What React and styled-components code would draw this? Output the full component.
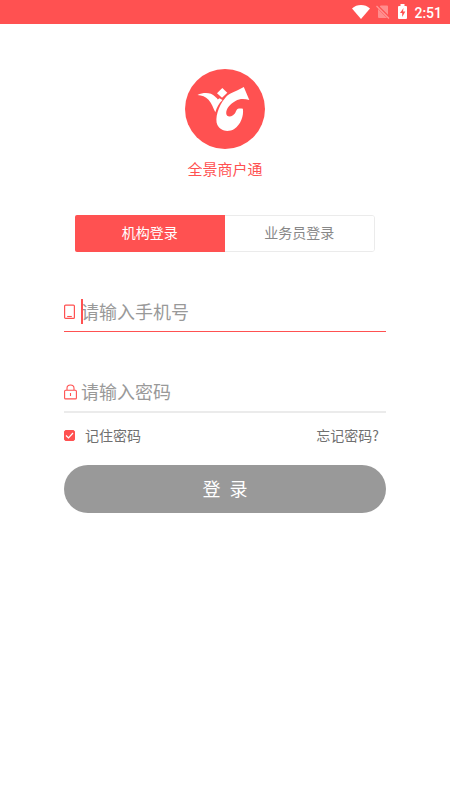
import React, { useState } from "react";
import styled, { createGlobalStyle } from "styled-components";

const RED = "#ff5151";

const GlobalStyle = createGlobalStyle`
  *, *::before, *::after { box-sizing: border-box; }
  body {
    margin: 0;
    background: #fff;
    font-family: "Noto Sans CJK SC", sans-serif;
  }
  button, input { font-family: inherit; }
`;

const StatusBar = styled.header`
  display: flex;
  align-items: center;
  justify-content: flex-end;
  height: 24px;
  padding-right: 8px;
  background: ${RED};
  color: #fff;
`;

const StatusIcon = styled.svg`
  display: block;
  flex: none;
  margin-right: ${(p) => p.$gap}px;
`;

const Clock = styled.time`
  font: 500 14px/24px Roboto, sans-serif;
  padding-top: 1px;
`;

const Page = styled.main`
  display: flex;
  flex-direction: column;
  align-items: center;
  padding: 45px 64px 0;
`;

const Logo = styled.svg`
  display: block;
  width: 80px;
  height: 80px;
`;

const AppName = styled.h1`
  margin: 10px 0 0;
  color: ${RED};
  font-size: 15px;
  font-weight: 400;
  line-height: 20px;
`;

const Tabs = styled.div`
  display: flex;
  align-self: stretch;
  height: 37px;
  margin: 36px 11px 0;
  border: 1px solid #ebebeb;
  border-radius: 3px;
`;

const Tab = styled.button`
  flex: 1;
  margin: ${(p) => (p.$active ? "-1px 0 -1px -1px" : "0")};
  padding: 0 0 3px;
  border: 0;
  border-radius: ${(p) => (p.$first ? "2px 0 0 2px" : "0 2px 2px 0")};
  background: ${(p) => (p.$active ? RED : "#fff")};
  color: ${(p) => (p.$active ? "#fff" : "#888")};
  font-size: 14px;
`;

const Form = styled.form`
  align-self: stretch;
  display: flex;
  flex-direction: column;
  margin-top: 40px;
`;

const Field = styled.label`
  display: flex;
  align-items: center;
  height: ${(p) => (p.$active ? 40 : 41)}px;
  margin-bottom: ${(p) => (p.$active ? 40 : 0)}px;
  border-bottom: ${(p) => (p.$active ? `1px solid ${RED}` : "2px solid #ebebeb")};
`;

const FieldIcon = styled.svg`
  display: block;
  flex: none;
  width: 13px;
  height: 16px;
`;

const InputBox = styled.span`
  position: relative;
  flex: 1;
  min-width: 0;
  margin-left: 4px;
`;

const Input = styled.input`
  display: block;
  width: 100%;
  height: 26px;
  padding: 0 0 2px;
  border: 0;
  outline: 0;
  background: transparent;
  color: #333;
  font-size: 18px;
  line-height: 24px;
  caret-color: ${RED};
  &::placeholder { color: #999; opacity: 1; }
`;

const Caret = styled.i`
  position: absolute;
  left: 0;
  top: 0;
  width: 2px;
  height: 25px;
  background: ${RED};
`;

const Options = styled.div`
  display: flex;
  align-items: center;
  justify-content: space-between;
  height: 24px;
  margin-top: 10px;
  padding-right: 7px;
  color: #707070;
  font-size: 14px;
`;

const Remember = styled.label`
  display: flex;
  align-items: center;
  gap: 10px;
`;

const CheckWrap = styled.span`
  display: grid;
  width: 11px;
  height: 11px;
  & > * { grid-area: 1 / 1; }
  svg { pointer-events: none; }
`;

const Checkbox = styled.input`
  appearance: none;
  width: 11px;
  height: 11px;
  margin: 0;
  border: 1px solid ${RED};
  border-radius: 2px;
  background: #fff;
  &:checked { background: ${RED}; }
`;

const Forgot = styled.a`
  color: inherit;
  text-decoration: none;
`;

const Submit = styled.button`
  display: flex;
  align-items: center;
  justify-content: center;
  gap: 9px;
  height: 48px;
  margin-top: 18px;
  padding: 0 0 2px;
  border: 0;
  border-radius: 24px;
  background: #999;
  color: #fff;
  font-size: 18px;
`;

export default function App() {
  const [tab, setTab] = useState(0);
  const [remember, setRemember] = useState(true);
  const [phone, setPhone] = useState("");
  return (
    <>
      <GlobalStyle />
      <StatusBar>
        <StatusIcon $gap={6} width="18" height="14" viewBox="0 0 18 14" aria-hidden="true">
          <path d="M0 3.5C5-1.1 13-1.1 18 3.5L9 14z" fill="#fff" />
        </StatusIcon>
        <StatusIcon $gap={8} width="14" height="14" viewBox="0 0 14 14" aria-hidden="true">
          <path d="M4.7 .5H11q1 0 1 1v8.2L3.7 1.5zM2 4 11 13H3q-1 0-1-1z" fill="#fff" opacity=".35" />
          <path d="M.5 1 13 13.5" stroke="#fff" strokeWidth="1.2" opacity=".4" />
        </StatusIcon>
        <StatusIcon $gap={7} width="9" height="16" viewBox="0 0 9 16" aria-hidden="true">
          <path d="M2.5 0h4v2H8q1 0 1 1v11q0 1-1 1H1q-1 0-1-1V3q0-1 1-1h1.5z" fill="#fff" />
          <path d="M5.5 4 2 9h2.2v4L7.3 7.500H5z" fill={RED} />
        </StatusIcon>
        <Clock>2:51</Clock>
      </StatusBar>
      <Page>
        <Logo viewBox="0 0 80 80" aria-hidden="true">
          <circle cx="40" cy="40" r="40" fill={RED} />
          <g fill="#fff">
            <path d="M12.5 26C19 23 26 23.4 30 27.5C31.5 28.8 32.2 29.5 32.8 30.5L34.5 29.3L37.5 31C34 34 31.8 38.5 30.3 43.2C28 39 27 34.5 23.5 30.8C20.5 27.5 17 26.3 12.5 26Z" />
            <path d="M37.3 19L42.3 23.7L37 28.7L32 24.2Z" />
            <path d="M58.8 18L64.3 31C59 29.5 54.5 29.6 50.5 32C45 35 41.2 39.5 41.2 44.2C41.5 47.500 44.500 48.500 48 46.3C51.500 44 50.5 41 53 39.8C54.500 39.200 56.300 39.500 57.9 39.8C58.9 47.500 55.6 55.6 49.2 60C43 63.800 35.300 62 32.4 56.1C29.5 49.5 33.3 37 40 29.2C41.500 27.3 43 25.8 45.5 24.5C49.5 22.5 54.5 20.500 58.8 18Z" />
          </g>
        </Logo>
        <AppName>全景商户通</AppName>
        <Tabs>
          <Tab type="button" $first $active={tab === 0} onClick={() => setTab(0)}>机构登录</Tab>
          <Tab type="button" $active={tab === 1} onClick={() => setTab(1)}>业务员登录</Tab>
        </Tabs>
        <Form onSubmit={(e) => e.preventDefault()}>
          <Field $active>
            <FieldIcon viewBox="0 0 13 16" aria-hidden="true">
              <rect x=".6" y="1.1" width="9.8" height="13.3" rx="1" fill="none" stroke={RED} strokeWidth="1.2" />
              <path d="M3.2 12.5h4.6" stroke={RED} strokeWidth="1.1" />
            </FieldIcon>
            <InputBox>
              <Input type="tel" aria-label="手机号" placeholder="请输入手机号" value={phone} onChange={(e) => setPhone(e.target.value)} />
              {phone === "" && <Caret />}
            </InputBox>
          </Field>
          <Field>
            <FieldIcon viewBox="0 0 13 16" aria-hidden="true">
              <g fill="none" stroke={RED} strokeWidth="1.1">
                <rect x=".6" y="6.2" width="11.8" height="8.7" rx="1" />
                <path d="M3 6V4.2C3 2.3 4.5 1 6.5 1S10 2.3 10 4.2V6M6.5 9v3" />
              </g>
            </FieldIcon>
            <InputBox>
              <Input type="password" aria-label="密码" placeholder="请输入密码" />
            </InputBox>
          </Field>
          <Options>
            <Remember>
              <CheckWrap>
                <Checkbox type="checkbox" checked={remember} onChange={(e) => setRemember(e.target.checked)} />
                <svg width="11" height="11" viewBox="0 0 11 11" aria-hidden="true">
                  <path d="M2 5.5 4.5 8 9 3" fill="none" stroke="#fff" strokeWidth="1.2" />
                </svg>
              </CheckWrap>
              记住密码
            </Remember>
            <Forgot href="#forgot">忘记密码?</Forgot>
          </Options>
          <Submit type="submit">
            <span>登</span>
            <span>录</span>
          </Submit>
        </Form>
      </Page>
    </>
  );
}
